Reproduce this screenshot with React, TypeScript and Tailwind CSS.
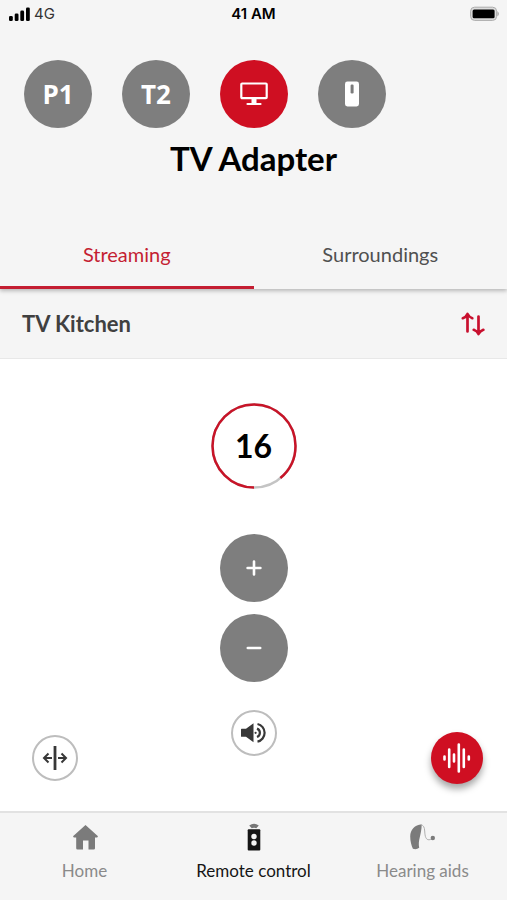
import { useState } from 'react';

const programs = [
  { id: 'p1', label: 'P1' },
  { id: 't2', label: 'T2' },
  { id: 'tv', name: 'TV Adapter' },
  { id: 'mic', name: 'Microphone' },
];

const tabs = ['Streaming', 'Surroundings'];

const MAX_VOLUME = 18;

function TvIcon() {
  return (
    <svg width="28" height="24" viewBox="0 0 28 24" fill="none" stroke="currentColor" strokeWidth="2.2">
      <rect x="1.3" y="1.5" width="25.4" height="14.6" rx="0.8" />
      <path d="M14 16v5" strokeWidth="5" />
      <path d="M7.5 22h13" strokeLinecap="round" />
    </svg>
  );
}

function MicIcon() {
  return (
    <svg width="14" height="26" viewBox="0 0 14 26">
      <rect x="0" y="0.5" width="14" height="25" rx="2.4" fill="currentColor" />
      <rect x="5.6" y="3.5" width="3" height="9" rx="1.2" fill="#7b7b7b" />
    </svg>
  );
}

function SwapIcon() {
  return (
    <svg width="24" height="24" viewBox="0 0 24 24" fill="none" stroke="currentColor" strokeWidth="2.7" strokeLinecap="round" strokeLinejoin="round">
      <path d="M6.5 19.5V3M1.8 6.2Q5.2 5 6.5 2Q7.900 5 11.300 6.200" />
      <path d="M17.500 4.500V21M12.800 17.800Q16.200 19 17.500 22Q18.900 19 22.300 17.800" />
    </svg>
  );
}

function SpeakerIcon() {
  return (
    <svg width="28" height="24" viewBox="0 0 28 24" fill="none" stroke="currentColor" strokeWidth="2.200">
      <path d="M1 8.400q0-.6.600-.6h4.400l7.500-5.500v19l-7.500-5.500H1.600q-.6 0-.6-.6z" fill="currentColor" stroke="none" />
      <circle cx="15.600" cy="11.800" r="1.100" fill="currentColor" stroke="none" />
      <path d="M17 7.600a4.500 4.500 0 0 1 0 8.400" />
      <path d="M17.500 3a9 9 0 0 1 0 17.600" />
    </svg>
  );
}

function SplitIcon() {
  return (
    <svg width="26" height="26" viewBox="0 0 26 26" fill="none" stroke="currentColor" strokeWidth="2">
      <path d="M13 1v24" strokeWidth="2.800" />
      <path d="M10 13H2.500M6.500 8.500L2 13l4.500 4.500M16 13h7.500M19.500 8.500L24 13l-4.500 4.500" />
    </svg>
  );
}

function WaveIcon() {
  return (
    <svg width="30" height="30" viewBox="0 0 30 30" stroke="currentColor" strokeWidth="2.600" strokeLinecap="round">
      <path d="M2.500 13.500v3M7.200 6.500v17.500M12 11.500v7M16.800 1.500v27M21.800 6.500v17.500M26.800 13.500v3" />
    </svg>
  );
}

function HomeIcon() {
  return (
    <svg width="28" height="28" viewBox="0 0 28 28" fill="currentColor">
      <path d="M14.500 2L27 13.200l-.8 1.200H24v10.800q0 1.300-1.300 1.300H17.500V17.500h-5.500v9H6.500q-1.300 0-1.300-1.300V14.400H2.800L2 13.200z" />
    </svg>
  );
}

function RemoteIcon() {
  return (
    <svg width="28" height="28" viewBox="0 0 28 28">
      <path d="M9.200 2.400q4.800-3.400 9.600 0L16.300 5.200q-2.300-1-4.600 0z" fill="#777777" />
      <rect x="7.700" y="6.200" width="12.600" height="21.300" rx="1" fill="currentColor" />
      <circle cx="14" cy="13.500" r="2.700" fill="#f4f4f4" />
      <circle cx="14" cy="20" r="2.700" fill="#f4f4f4" />
    </svg>
  );
}

function HearingAidIcon() {
  return (
    <svg width="28" height="28" viewBox="0 0 28 28">
      <path d="M12.500 1.500C6 1.500 1.200 6.500 1.200 13.500c0 4.500 1.300 9.500 2.700 12.300q3.500 1.200 6.300-1c-1.500-8 2.300-12.500 2.500-23.300z" fill="currentColor" />
      <path d="M11.500 1.800c3 .2 4 2.400 4.200 6.200C16 14 17 16.800 20 16.800q1.800 0 3-1.300" fill="none" stroke="#a6a6a6" strokeWidth="0.900" />
      <circle cx="23.800" cy="15" r="2.200" fill="currentColor" />
    </svg>
  );
}

function StatusBar() {
  return (
    <div className="grid grid-cols-3 items-center h-7 px-2 text-black">
      <div className="flex items-center gap-1">
        <svg width="22" height="14" viewBox="0 0 22 14" fill="currentColor">
          <rect x="1" y="9" width="3.800" height="5" rx="1.300" />
          <rect x="6.700" y="6.400" width="3.800" height="7.600" rx="1.300" />
          <rect x="12.300" y="3.600" width="3.800" height="10.400" rx="1.300" />
          <rect x="18" y="0.500" width="3.800" height="13.500" rx="1.300" />
        </svg>
        <span className="font-[Inter,sans-serif] text-[15px] leading-5 text-[#333333]">4G</span>
      </div>
      <span className="font-[Inter,sans-serif] text-[15px] leading-5 font-semibold text-center">41 AM</span>
      <svg className="justify-self-end" width="30" height="16" viewBox="0 0 30 16">
        <rect x="1.600" y="1.200" width="26" height="13.200" rx="4" fill="#dcdcdc" stroke="#acacac" />
        <rect x="3.600" y="3.400" width="22" height="8.800" rx="1.500" fill="#000" />
        <path d="M28.300 5q3.400 2.800 0 5.600z" fill="#acacac" />
      </svg>
    </div>
  );
}

function VolumeRing({ value }: { value: number }) {
  const radius = 41.5;
  const length = 2 * Math.PI * radius;
  return (
    <div className="relative w-[86px] h-[86px] flex items-center justify-center">
      <svg className="absolute inset-0 rotate-90" width="86" height="86" fill="none" strokeWidth="2.500">
        <circle cx="43" cy="43" r={radius} stroke="#c4c4c4" />
        <circle
          cx="43"
          cy="43"
          r={radius}
          stroke="#c81428"
          strokeDasharray={`${(length * value) / MAX_VOLUME} ${length}`}
        />
      </svg>
      <output className="relative text-[32px] leading-10 font-bold text-black">{value}</output>
    </div>
  );
}

export default function App() {
  const [program, setProgram] = useState('tv');
  const [tab, setTab] = useState('Streaming');
  const [volume, setVolume] = useState(16);

  return (
    <div className="min-h-screen flex flex-col bg-white font-[Lato,sans-serif]">
      {/* Header */}
      <header className="relative bg-[#f5f5f5] shadow-[0_2px_4px_rgba(0,0,0,0.25)]">
        <StatusBar />
        <div className="flex gap-[30px] px-6 pt-8">
          {programs.map(p => (
            <button
              key={p.id}
              aria-label={p.name}
              onClick={() => setProgram(p.id)}
              className={`w-[68px] h-[68px] shrink-0 rounded-full flex items-center justify-center text-white font-['Open_Sans',sans-serif] text-[26px] leading-8 font-bold ${
                program === p.id ? 'bg-[#cf0f22]' : 'bg-[#7e7e7e]'
              }`}
            >
              {p.id === 'tv' && <TvIcon />}
              {p.id === 'mic' && <MicIcon />}
              {p.label}
            </button>
          ))}
        </div>
        <h1 className="pt-2.5 text-center text-[33px] leading-10 font-bold text-black">TV Adapter</h1>
        <div className="flex pt-11" role="tablist">
          {tabs.map(t => (
            <button
              key={t}
              role="tab"
              aria-selected={tab === t}
              onClick={() => setTab(t)}
              className={`flex-1 h-[67px] border-b-3 text-xl ${
                tab === t ? 'border-[#c41e32] text-[#c41e32]' : 'border-transparent text-[#505050]'
              }`}
            >
              {t}
            </button>
          ))}
        </div>
      </header>

      {/* Source */}
      <div className="flex items-center justify-between h-[70px] px-[22px] bg-[#f5f5f5] border-b border-[#e8e8e8]">
        <h2 className="text-[22px] leading-7 font-bold text-[#404040]">TV Kitchen</h2>
        <button aria-label="Change source" className="text-[#c8102e]">
          <SwapIcon />
        </button>
      </div>

      {/* Volume */}
      <main className="flex-1 flex flex-col items-center pt-11">
        <VolumeRing value={volume} />
        <div className="flex flex-col gap-3 pt-[45px]">
          <button
            aria-label="Volume up"
            onClick={() => setVolume(v => Math.min(MAX_VOLUME, v + 1))}
            className="w-[68px] h-[68px] rounded-full bg-[#7e7e7e] flex items-center justify-center text-white"
          >
            <svg width="16" height="16" viewBox="0 0 16 16" stroke="currentColor" strokeWidth="2.600" strokeLinecap="round">
              <path d="M8 1.600v12.800M1.600 8h12.800" />
            </svg>
          </button>
          <button
            aria-label="Volume down"
            onClick={() => setVolume(v => Math.max(0, v - 1))}
            className="w-[68px] h-[68px] rounded-full bg-[#7e7e7e] flex items-center justify-center text-white"
          >
            <svg width="16" height="16" viewBox="0 0 16 16" stroke="currentColor" strokeWidth="2.600" strokeLinecap="round">
              <path d="M1.800 8h12.400" />
            </svg>
          </button>
        </div>

        <div className="w-full grid grid-cols-[1fr_auto_1fr] items-end h-[74px] mt-7 px-6">
          <div className="flex items-center h-[52px] pl-2">
            <button aria-label="Split sides" className="w-[46px] h-[46px] rounded-full border-2 border-[#bdbdbd] flex items-center justify-center text-[#383838]">
              <SplitIcon />
            </button>
          </div>
          <button aria-label="Mute" className="self-start w-[46px] h-[46px] rounded-full border-2 border-[#bdbdbd] flex items-center justify-center text-[#383838]">
            <SpeakerIcon />
          </button>
          <button aria-label="Sound settings" className="justify-self-end w-[52px] h-[52px] rounded-full bg-[#cf0f22] flex items-center justify-center text-white shadow-[0_5px_7px_rgba(0,0,0,0.35)]">
            <WaveIcon />
          </button>
        </div>
      </main>

      {/* Bottom navigation */}
      <nav className="grid grid-cols-3 h-[89px] bg-[#f5f5f5] border-t-2 border-[#e2e2e2] text-[17px] leading-6 text-[#8a8a8a]">
        <a href="#home" className="flex flex-col items-center pt-[10px] gap-2">
          <span className="text-[#7b7b7b]"><HomeIcon /></span>
          Home
        </a>
        <a href="#remote" aria-current="page" className="flex flex-col items-center pt-[10px] gap-2 text-[#151515]">
          <RemoteIcon />
          Remote control
        </a>
        <a href="#aids" className="flex flex-col items-center pt-[10px] gap-2">
          <span className="text-[#7b7b7b]"><HearingAidIcon /></span>
          Hearing aids
        </a>
      </nav>
    </div>
  );
}
